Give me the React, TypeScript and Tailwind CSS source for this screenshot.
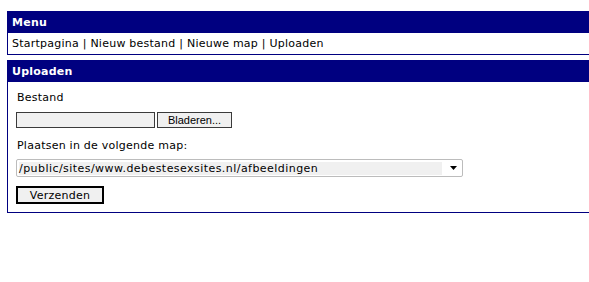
import React from "react";

const navy = "bg-[#000080]";

const App = () => {
  return (
    <div className="min-h-[282px] bg-white pt-[11px] pl-[7px] font-['DejaVu_Sans',Verdana,sans-serif] text-[11px] leading-[13px] tracking-[0.24px] text-black">
      {/* Menu */}
      <div>
        <div className={`${navy} h-[22px] flex items-center px-[5px] font-bold text-white`}>Menu</div>
        <div className="h-[22px] flex items-center pl-[4px] border-l border-b border-[#000080]">
          Startpagina | Nieuw bestand | Nieuwe map | Uploaden
        </div>
      </div>

      {/* Uploaden */}
      <div className="mt-[5px]">
        <div className={`${navy} h-[22px] flex items-center px-[5px] font-bold text-white`}>Uploaden</div>
        <div className="flex flex-col items-start border-l border-b border-[#000080] pl-[8px] pt-[9px] pb-[8px]">
          <div className="pl-[1px]">Bestand</div>

          <div className="mt-[8px] flex gap-[2px]">
            <div className="h-[16px] w-[139px] border border-[#3a3a3a] bg-[#f0f0f0]" />
            <div className="h-[16px] w-[75px] border border-[#3a3a3a] bg-[#f0f0f0] flex items-center justify-center font-['Liberation_Sans',Arial,sans-serif] text-[11px] tracking-normal">
              Bladeren...
            </div>
          </div>

          <div className="mt-[11px] pl-[1px]">Plaatsen in de volgende map:</div>

          <div className="mt-[7px] h-[18px] w-[447px] rounded-[2px] border border-[#bcbcbc] bg-white flex items-center pl-[2px] pr-[5px]">
            <div className="h-[13px] flex-1 bg-[#f0f0f0] flex items-center tracking-[0.45px]">
              /public/sites/www.debestesexsites.nl/afbeeldingen
            </div>
            <svg width="7" height="4" viewBox="0 0 7 4" className="ml-[8px]">
              <path d="M0 0h7L3.5 4z" fill="#000" />
            </svg>
          </div>

          <div className="mt-[9px] h-[18px] w-[88px] border-2 border-black bg-[#f0f0f0] flex items-center justify-center">
            Verzenden
          </div>
        </div>
      </div>
    </div>
  );
};

export default App;
